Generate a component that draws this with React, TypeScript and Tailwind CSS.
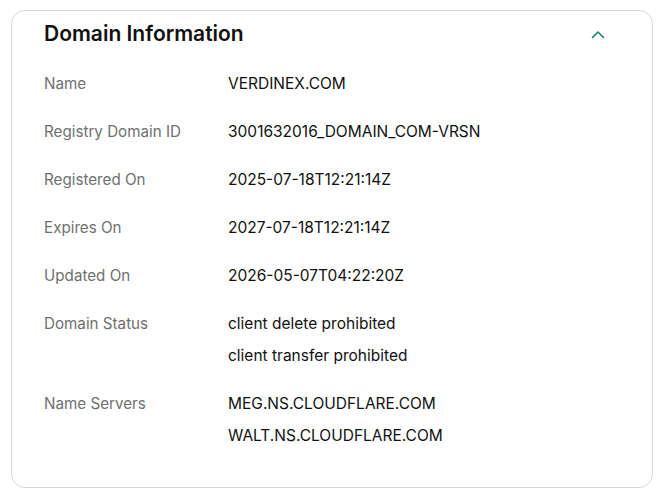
import React from 'react';

const rows: { label: string; values: string[] }[] = [
  { label: 'Name', values: ['VERDINEX.COM'] },
  { label: 'Registry Domain ID', values: ['3001632016_DOMAIN_COM-VRSN'] },
  { label: 'Registered On', values: ['2025-07-18T12:21:14Z'] },
  { label: 'Expires On', values: ['2027-07-18T12:21:14Z'] },
  { label: 'Updated On', values: ['2026-05-07T04:22:20Z'] },
  { label: 'Domain Status', values: ['client delete prohibited', 'client transfer prohibited'] },
  { label: 'Name Servers', values: ['MEG.NS.CLOUDFLARE.COM', 'WALT.NS.CLOUDFLARE.COM'] },
];

const App: React.FC = () => {
  return (
    <div className="min-h-screen bg-white pt-[10px] pl-[11px]" style={{ fontFamily: 'Inter, "Open Sans", sans-serif' }}>
      <div className="w-[642px] h-[478px] rounded-[14px] border border-[#d4d8dc] bg-white pl-[32px] pr-[47px] pt-[9px]">
        {/* header */}
        <div className="flex items-center justify-between h-[28px]">
          <h2 className="text-[21px] font-semibold text-[#111111]">Domain Information</h2>
          <svg width="14" height="9" viewBox="0 0 14 9" fill="none">
            <path d="M1.5 7.5L7 2L12.5 7.5" stroke="#14807c" strokeWidth="1.6" strokeLinecap="round" strokeLinejoin="round" />
          </svg>
        </div>

        <div className="mt-[20px] flex flex-col gap-4">
          {rows.map((row) => (
            <div key={row.label} className="flex">
              <div className="w-[184px] shrink-0 text-[15.2px] leading-[32px] text-[#6f6f6f]">{row.label}</div>
              <div className="flex flex-col">
                {row.values.map((v) => (
                  <div key={v} className="text-[15.5px] leading-[32px] text-[#111111]">{v}</div>
                ))}
              </div>
            </div>
          ))}
        </div>
      </div>
    </div>
  );
};

export default App;
